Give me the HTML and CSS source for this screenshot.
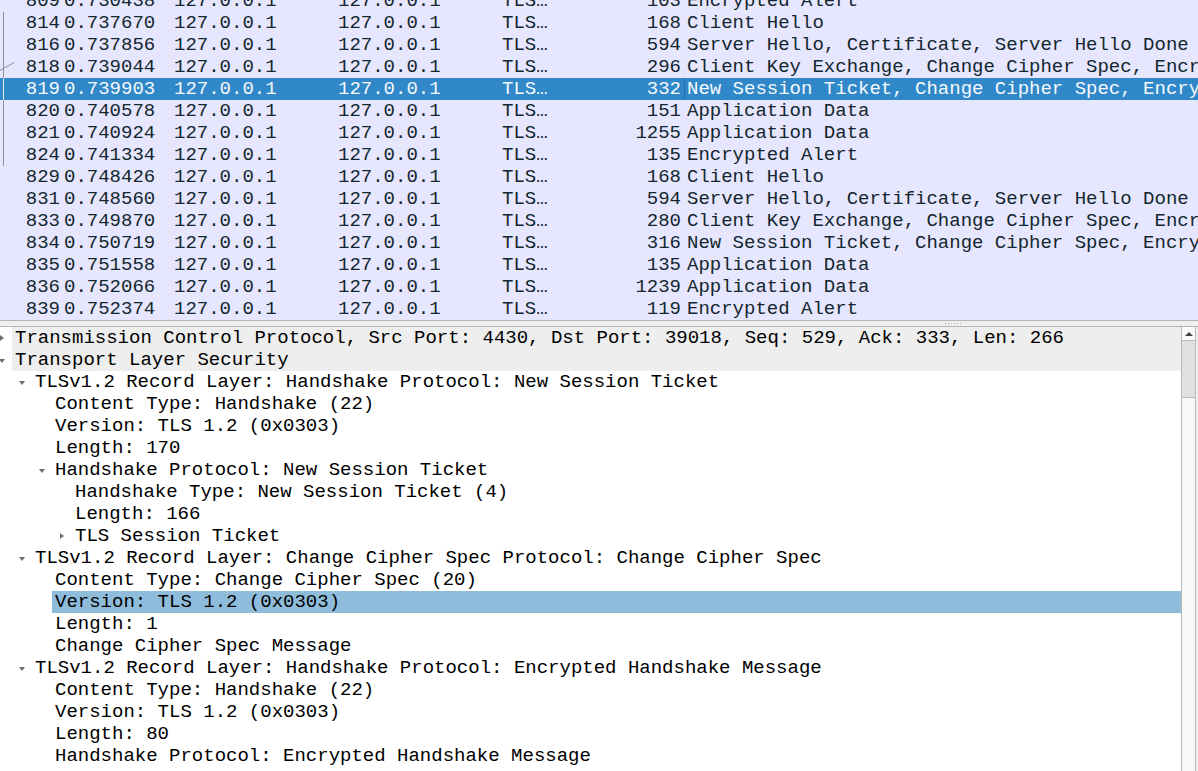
FILE: index.html
```html
<!DOCTYPE html>
<html>
<head>
<meta charset="utf-8">
<link rel="stylesheet" href="styles.css">
</head>
<body>
<div class="app">
  <div class="plist">
    <svg class="related" width="20" height="320" viewBox="0 0 20 320">
      <line x1="3.5" y1="12" x2="3.5" y2="78" stroke="#8e8e9e" stroke-width="1"/>
      <line x1="3.5" y1="78" x2="3.5" y2="100" stroke="#e8f0ff" stroke-width="1"/>
      <line x1="3.5" y1="100" x2="3.5" y2="166" stroke="#8e8e9e" stroke-width="1"/>
      <line x1="0" y1="70.5" x2="14" y2="62.5" stroke="#8e8e9e" stroke-width="1"/>
    </svg>
    <div class="prows">
      <div class="prow"><span class="c-no">809</span><span class="c-time">0.730438</span><span class="c-src">127.0.0.1</span><span class="c-dst">127.0.0.1</span><span class="c-proto">TLS…</span><span class="c-len">103</span><span class="c-info">Encrypted Alert</span></div>
      <div class="prow"><span class="c-no">814</span><span class="c-time">0.737670</span><span class="c-src">127.0.0.1</span><span class="c-dst">127.0.0.1</span><span class="c-proto">TLS…</span><span class="c-len">168</span><span class="c-info">Client Hello</span></div>
      <div class="prow"><span class="c-no">816</span><span class="c-time">0.737856</span><span class="c-src">127.0.0.1</span><span class="c-dst">127.0.0.1</span><span class="c-proto">TLS…</span><span class="c-len">594</span><span class="c-info">Server Hello, Certificate, Server Hello Done</span></div>
      <div class="prow"><span class="c-no">818</span><span class="c-time">0.739044</span><span class="c-src">127.0.0.1</span><span class="c-dst">127.0.0.1</span><span class="c-proto">TLS…</span><span class="c-len">296</span><span class="c-info">Client Key Exchange, Change Cipher Spec, Encrypted Handshake Message</span></div>
      <div class="prow sel"><span class="c-no">819</span><span class="c-time">0.739903</span><span class="c-src">127.0.0.1</span><span class="c-dst">127.0.0.1</span><span class="c-proto">TLS…</span><span class="c-len">332</span><span class="c-info focus">New Session Ticket, Change Cipher Spec, Encrypted Handshake Message</span></div>
      <div class="prow"><span class="c-no">820</span><span class="c-time">0.740578</span><span class="c-src">127.0.0.1</span><span class="c-dst">127.0.0.1</span><span class="c-proto">TLS…</span><span class="c-len">151</span><span class="c-info">Application Data</span></div>
      <div class="prow"><span class="c-no">821</span><span class="c-time">0.740924</span><span class="c-src">127.0.0.1</span><span class="c-dst">127.0.0.1</span><span class="c-proto">TLS…</span><span class="c-len">1255</span><span class="c-info">Application Data</span></div>
      <div class="prow"><span class="c-no">824</span><span class="c-time">0.741334</span><span class="c-src">127.0.0.1</span><span class="c-dst">127.0.0.1</span><span class="c-proto">TLS…</span><span class="c-len">135</span><span class="c-info">Encrypted Alert</span></div>
      <div class="prow"><span class="c-no">829</span><span class="c-time">0.748426</span><span class="c-src">127.0.0.1</span><span class="c-dst">127.0.0.1</span><span class="c-proto">TLS…</span><span class="c-len">168</span><span class="c-info">Client Hello</span></div>
      <div class="prow"><span class="c-no">831</span><span class="c-time">0.748560</span><span class="c-src">127.0.0.1</span><span class="c-dst">127.0.0.1</span><span class="c-proto">TLS…</span><span class="c-len">594</span><span class="c-info">Server Hello, Certificate, Server Hello Done</span></div>
      <div class="prow"><span class="c-no">833</span><span class="c-time">0.749870</span><span class="c-src">127.0.0.1</span><span class="c-dst">127.0.0.1</span><span class="c-proto">TLS…</span><span class="c-len">280</span><span class="c-info">Client Key Exchange, Change Cipher Spec, Encrypted Handshake Message</span></div>
      <div class="prow"><span class="c-no">834</span><span class="c-time">0.750719</span><span class="c-src">127.0.0.1</span><span class="c-dst">127.0.0.1</span><span class="c-proto">TLS…</span><span class="c-len">316</span><span class="c-info">New Session Ticket, Change Cipher Spec, Encrypted Handshake Message</span></div>
      <div class="prow"><span class="c-no">835</span><span class="c-time">0.751558</span><span class="c-src">127.0.0.1</span><span class="c-dst">127.0.0.1</span><span class="c-proto">TLS…</span><span class="c-len">135</span><span class="c-info">Application Data</span></div>
      <div class="prow"><span class="c-no">836</span><span class="c-time">0.752066</span><span class="c-src">127.0.0.1</span><span class="c-dst">127.0.0.1</span><span class="c-proto">TLS…</span><span class="c-len">1239</span><span class="c-info">Application Data</span></div>
      <div class="prow"><span class="c-no">839</span><span class="c-time">0.752374</span><span class="c-src">127.0.0.1</span><span class="c-dst">127.0.0.1</span><span class="c-proto">TLS…</span><span class="c-len">119</span><span class="c-info">Encrypted Alert</span></div>
    </div>
  </div>
  <div class="splitter"><div class="grip"><i></i><i></i><i></i><i></i><i></i><i></i></div></div>
  <div class="details">
    <div class="tree">
      <div class="trow top"><span class="ind l0"></span><span class="tog closed"></span><span class="lbl">Transmission Control Protocol, Src Port: 4430, Dst Port: 39018, Seq: 529, Ack: 333, Len: 266</span></div>
      <div class="trow top"><span class="ind l0"></span><span class="tog open"></span><span class="lbl">Transport Layer Security</span></div>
      <div class="trow"><span class="ind l1"></span><span class="tog open"></span><span class="lbl">TLSv1.2 Record Layer: Handshake Protocol: New Session Ticket</span></div>
      <div class="trow"><span class="ind l2"></span><span class="tog"></span><span class="lbl">Content Type: Handshake (22)</span></div>
      <div class="trow"><span class="ind l2"></span><span class="tog"></span><span class="lbl">Version: TLS 1.2 (0x0303)</span></div>
      <div class="trow"><span class="ind l2"></span><span class="tog"></span><span class="lbl">Length: 170</span></div>
      <div class="trow"><span class="ind l2"></span><span class="tog open"></span><span class="lbl">Handshake Protocol: New Session Ticket</span></div>
      <div class="trow"><span class="ind l3"></span><span class="tog"></span><span class="lbl">Handshake Type: New Session Ticket (4)</span></div>
      <div class="trow"><span class="ind l3"></span><span class="tog"></span><span class="lbl">Length: 166</span></div>
      <div class="trow"><span class="ind l3"></span><span class="tog closed"></span><span class="lbl">TLS Session Ticket</span></div>
      <div class="trow"><span class="ind l1"></span><span class="tog open"></span><span class="lbl">TLSv1.2 Record Layer: Change Cipher Spec Protocol: Change Cipher Spec</span></div>
      <div class="trow"><span class="ind l2"></span><span class="tog"></span><span class="lbl">Content Type: Change Cipher Spec (20)</span></div>
      <div class="trow tsel"><span class="ind l2"></span><span class="tog"></span><span class="lbl">Version: TLS 1.2 (0x0303)</span></div>
      <div class="trow"><span class="ind l2"></span><span class="tog"></span><span class="lbl">Length: 1</span></div>
      <div class="trow"><span class="ind l2"></span><span class="tog"></span><span class="lbl">Change Cipher Spec Message</span></div>
      <div class="trow"><span class="ind l1"></span><span class="tog open"></span><span class="lbl">TLSv1.2 Record Layer: Handshake Protocol: Encrypted Handshake Message</span></div>
      <div class="trow"><span class="ind l2"></span><span class="tog"></span><span class="lbl">Content Type: Handshake (22)</span></div>
      <div class="trow"><span class="ind l2"></span><span class="tog"></span><span class="lbl">Version: TLS 1.2 (0x0303)</span></div>
      <div class="trow"><span class="ind l2"></span><span class="tog"></span><span class="lbl">Length: 80</span></div>
      <div class="trow"><span class="ind l2"></span><span class="tog"></span><span class="lbl">Handshake Protocol: Encrypted Handshake Message</span></div>
    </div>
    <div class="scrollbar">
      <div class="sb-up"><span class="sb-arrow"></span></div>
      <div class="sb-thumb"></div>
      <div class="sb-track"></div>
    </div>
  </div>
</div>
</body>
</html>
```
FILE: styles.css
```css
html, body {
  margin: 0;
  padding: 0;
}
body {
  width: 1198px;
  height: 771px;
  overflow: hidden;
  background: #efefef;
  font-family: "Liberation Mono", "DejaVu Sans Mono", monospace;
  font-size: 19px;
}
.app {
  display: flex;
  flex-direction: column;
  height: 771px;
}
.plist {
  position: relative;
  height: 320px;
  overflow: hidden;
  background: #e7e6ff;
  flex: none;
}
.related {
  position: absolute;
  left: 0;
  top: 0;
  z-index: 2;
}
.prows {
  margin-top: -10px;
}
.prow {
  display: flex;
  height: 22px;
  line-height: 22px;
  color: #12272e;
  white-space: nowrap;
}
.prow > span {
  box-sizing: border-box;
  flex: none;
  overflow: hidden;
}
.prow .c-no { width: 60px; text-align: right; }
.prow .c-time { width: 110px; padding-left: 4px; }
.prow .c-src { width: 164px; padding-left: 4px; }
.prow .c-dst { width: 164px; padding-left: 4px; }
.prow .c-proto { width: 62px; padding-left: 4px; }
.prow .c-len { width: 124px; text-align: right; padding-right: 3px; }
.prow .c-info { flex: 1 1 auto; width: 0; padding-left: 3px; }
.prow.sel {
  background: #3088c8;
  color: #f4f8fc;
}
.prow .c-info.focus {
  border-left: 1px solid #2572ab;
  padding-left: 2px;
}
.splitter {
  flex: none;
  height: 5px;
  border-top: 1px solid #b5b5b5;
  border-bottom: 1px solid #b5b5b5;
  background: #efefef;
  display: flex;
  align-items: center;
}
.grip {
  margin-left: 945px;
  display: flex;
  gap: 2px;
}
.grip i {
  display: block;
  width: 1px;
  height: 1px;
  background: #a8a8a8;
}
.details {
  flex: 1;
  display: flex;
  min-height: 0;
}
.tree {
  width: 1181px;
  flex: none;
  background: #ffffff;
  color: #000000;
  overflow: hidden;
}
.trow {
  display: flex;
  align-items: center;
  height: 22px;
  line-height: 22px;
  white-space: nowrap;
}
.ind { flex: none; height: 22px; }
.ind.l0 { width: 0; }
.ind.l1 { width: 20px; }
.ind.l2 { width: 40px; }
.ind.l3 { width: 60px; }
.tog {
  flex: none;
  width: 12px;
  height: 22px;
  display: flex;
  align-items: center;
}
.tog.open::before {
  content: "";
  display: block;
  margin-left: -1px;
  margin-top: 1px;
  width: 0;
  height: 0;
  border-left: 3.5px solid transparent;
  border-right: 3.5px solid transparent;
  border-top: 4px solid #6e6e6e;
}
.tog.closed::before {
  content: "";
  display: block;
  margin-left: 0;
  width: 0;
  height: 0;
  border-top: 3.5px solid transparent;
  border-bottom: 3.5px solid transparent;
  border-left: 4px solid #6e6e6e;
}
.lbl {
  flex: 1;
  padding-left: 3px;
  height: 22px;
}
.trow.top .lbl { background: #eeeeee; }
.trow.tsel .lbl { background: #90bcdc; }
.scrollbar {
  flex: none;
  width: 13px;
  margin-right: 2px;
  border-left: 1px solid #b9b9b9;
  border-right: 1px solid #b9b9b9;
  display: flex;
  flex-direction: column;
  background: #f7f7f7;
}
.sb-up {
  height: 13px;
  display: flex;
  align-items: center;
  justify-content: center;
  background: #fafafa;
}
.sb-arrow {
  width: 0;
  height: 0;
  border-left: 4px solid transparent;
  border-right: 4px solid transparent;
  border-bottom: 4px solid #404040;
}
.sb-thumb {
  height: 56px;
  background: #e1e1e1;
  border-top: 1px solid #b9b9b9;
  border-bottom: 1px solid #b9b9b9;
}
.sb-track {
  flex: 1;
  background: #f8f8f8;
}
```
